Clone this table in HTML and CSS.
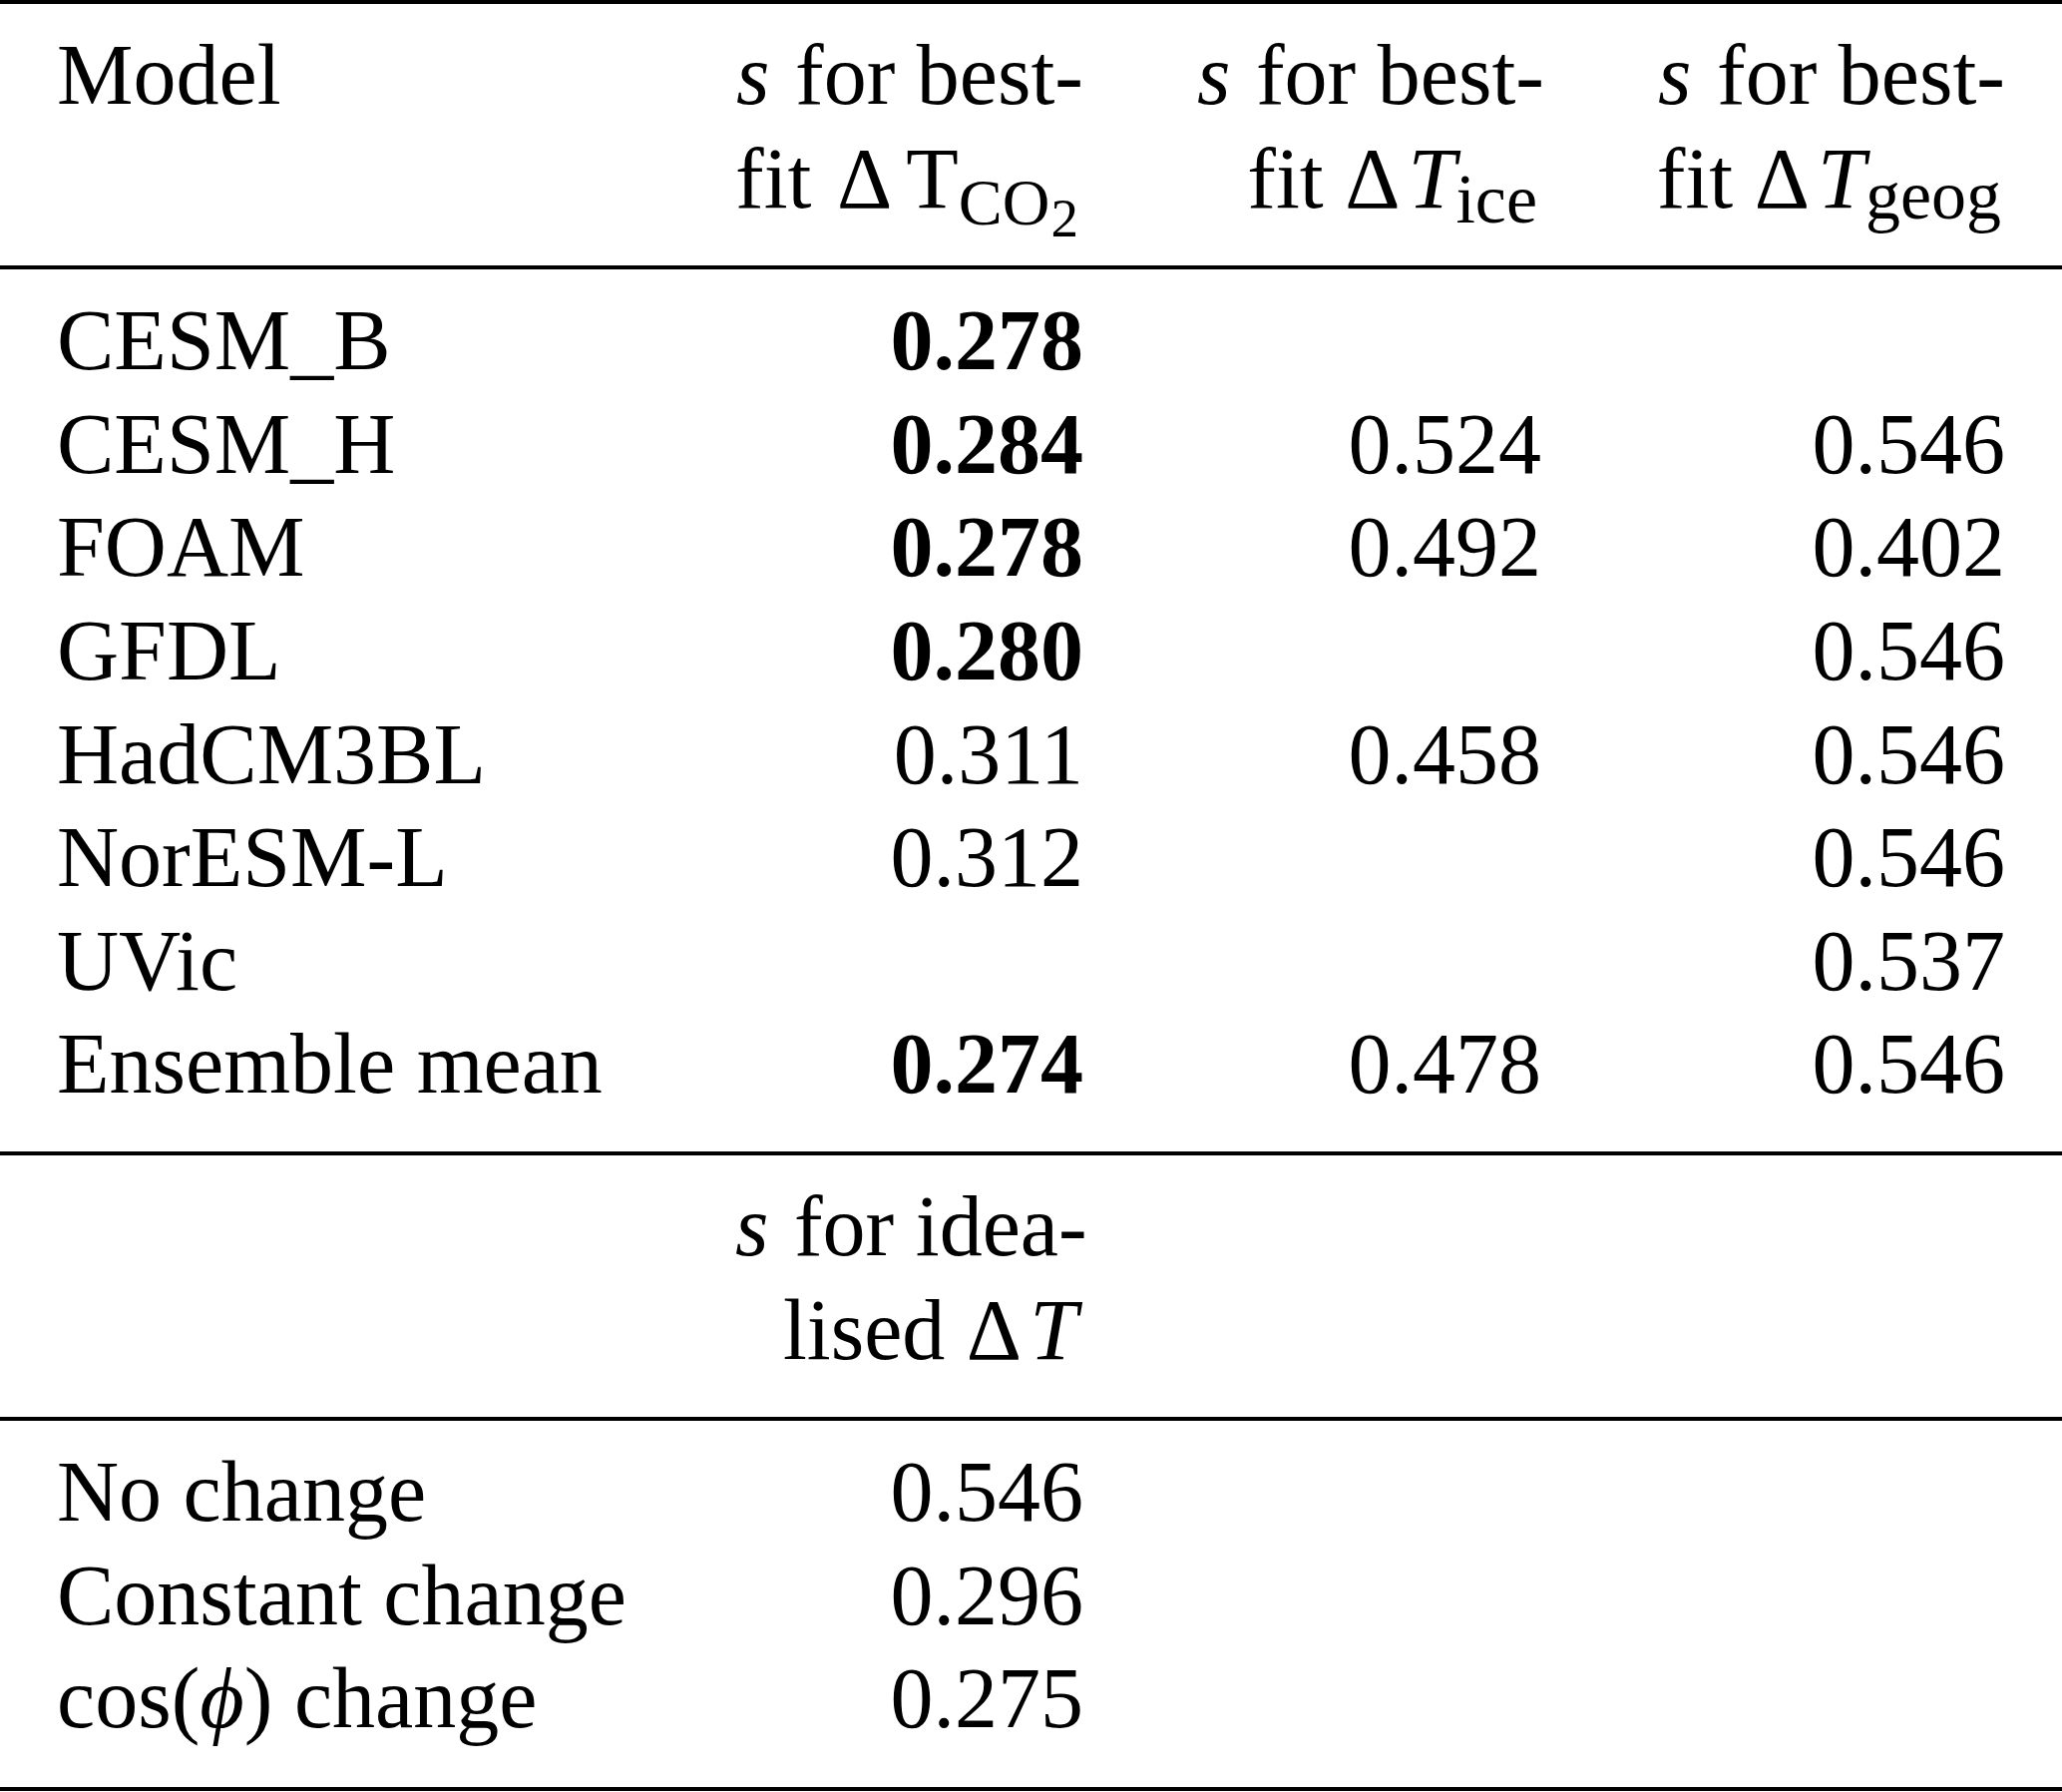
FILE: index.html
```html
<!DOCTYPE html>
<html lang="en">
<head>
<meta charset="utf-8">
<title>Table</title>
<link rel="stylesheet" href="styles.css">
</head>
<body>
<div class="tbl">
  <div class="sec">
    <div class="c c1">Model</div>
    <div class="c num"><i class="s">s</i> for best-<br>fit <span class="delta delta-wide">Δ</span>T<span class="sub sub-co">CO<span class="sub2">2</span></span></div>
    <div class="c num"><i class="s">s</i> for best-<br>fit <span class="delta">Δ</span><i class="t">T</i><span class="sub sub-ice">ice</span></div>
    <div class="c num"><i class="s">s</i> for best-<br>fit <span class="delta">Δ</span><i class="t">T</i><span class="sub sub-geog">geog</span></div>
  </div>
  <div class="sec">
    <div class="c c1">CESM_B</div><div class="c num"><b>0.278</b></div><div class="c num"></div><div class="c num"></div>
    <div class="c c1">CESM_H</div><div class="c num"><b>0.284</b></div><div class="c num">0.524</div><div class="c num">0.546</div>
    <div class="c c1">FOAM</div><div class="c num"><b>0.278</b></div><div class="c num">0.492</div><div class="c num">0.402</div>
    <div class="c c1">GFDL</div><div class="c num"><b>0.280</b></div><div class="c num"></div><div class="c num">0.546</div>
    <div class="c c1">HadCM3BL</div><div class="c num">0.311</div><div class="c num">0.458</div><div class="c num">0.546</div>
    <div class="c c1">NorESM-L</div><div class="c num">0.312</div><div class="c num"></div><div class="c num">0.546</div>
    <div class="c c1">UVic</div><div class="c num"></div><div class="c num"></div><div class="c num">0.537</div>
    <div class="c c1">Ensemble mean</div><div class="c num"><b>0.274</b></div><div class="c num">0.478</div><div class="c num">0.546</div>
  </div>
  <div class="sec">
    <div class="c c1"></div>
    <div class="c num"><i class="s">s</i> for idea-<br>lised <span class="delta">Δ</span><i class="t t-end">T</i></div>
    <div class="c num"></div>
    <div class="c num"></div>
  </div>
  <div class="sec sec-last">
    <div class="c c1">No change</div><div class="c num">0.546</div><div class="c num"></div><div class="c num"></div>
    <div class="c c1">Constant change</div><div class="c num">0.296</div><div class="c num"></div><div class="c num"></div>
    <div class="c c1">cos(<i class="phi">ϕ</i>) change</div><div class="c num">0.275</div><div class="c num"></div><div class="c num"></div>
  </div>
</div>
</body>
</html>
```

FILE: styles.css
```css
html, body {
  margin: 0;
  padding: 0;
  background: #ffffff;
}

.tbl {
  width: 2067px;
  font-family: "Liberation Serif", "Times New Roman", serif;
  font-size: 86px;
  line-height: 103.6px;
  color: #000000;
  border-top: 4px solid #000000;
}

.sec {
  display: grid;
  grid-template-columns: 680px 463px 459px 465px;
  padding: 20px 0 35px;
  border-bottom: 4px solid #000000;
}

.sec-last {
  padding-bottom: 36px;
}

.c {
  padding: 0 57px;
  white-space: nowrap;
}

.c1 {
  text-align: left;
}

.num {
  text-align: right;
}

.num b {
  font-weight: 700;
}

.s {
  font-style: italic;
  margin-right: 4px;
}

.delta {
  margin-right: 8px;
}

.delta-wide {
  margin-left: 4px;
  margin-right: 14px;
}

.t {
  font-style: italic;
}

.t-end {
  margin-right: 6px;
}

.sub {
  line-height: 0;
}

.sub-co {
  font-size: 66px;
  vertical-align: -17px;
  margin-right: 3px;
}

.sub2 {
  font-size: 55px;
  vertical-align: -12px;
  margin-left: 1px;
  margin-right: 3px;
}

.sub-ice {
  font-size: 70px;
  vertical-align: -15px;
  margin-right: 4px;
}

.sub-geog {
  font-size: 70px;
  vertical-align: -11px;
  margin-right: 4px;
}

.phi {
  font-style: italic;
  font-family: "Liberation Serif", "DejaVu Serif", serif;
}
```
